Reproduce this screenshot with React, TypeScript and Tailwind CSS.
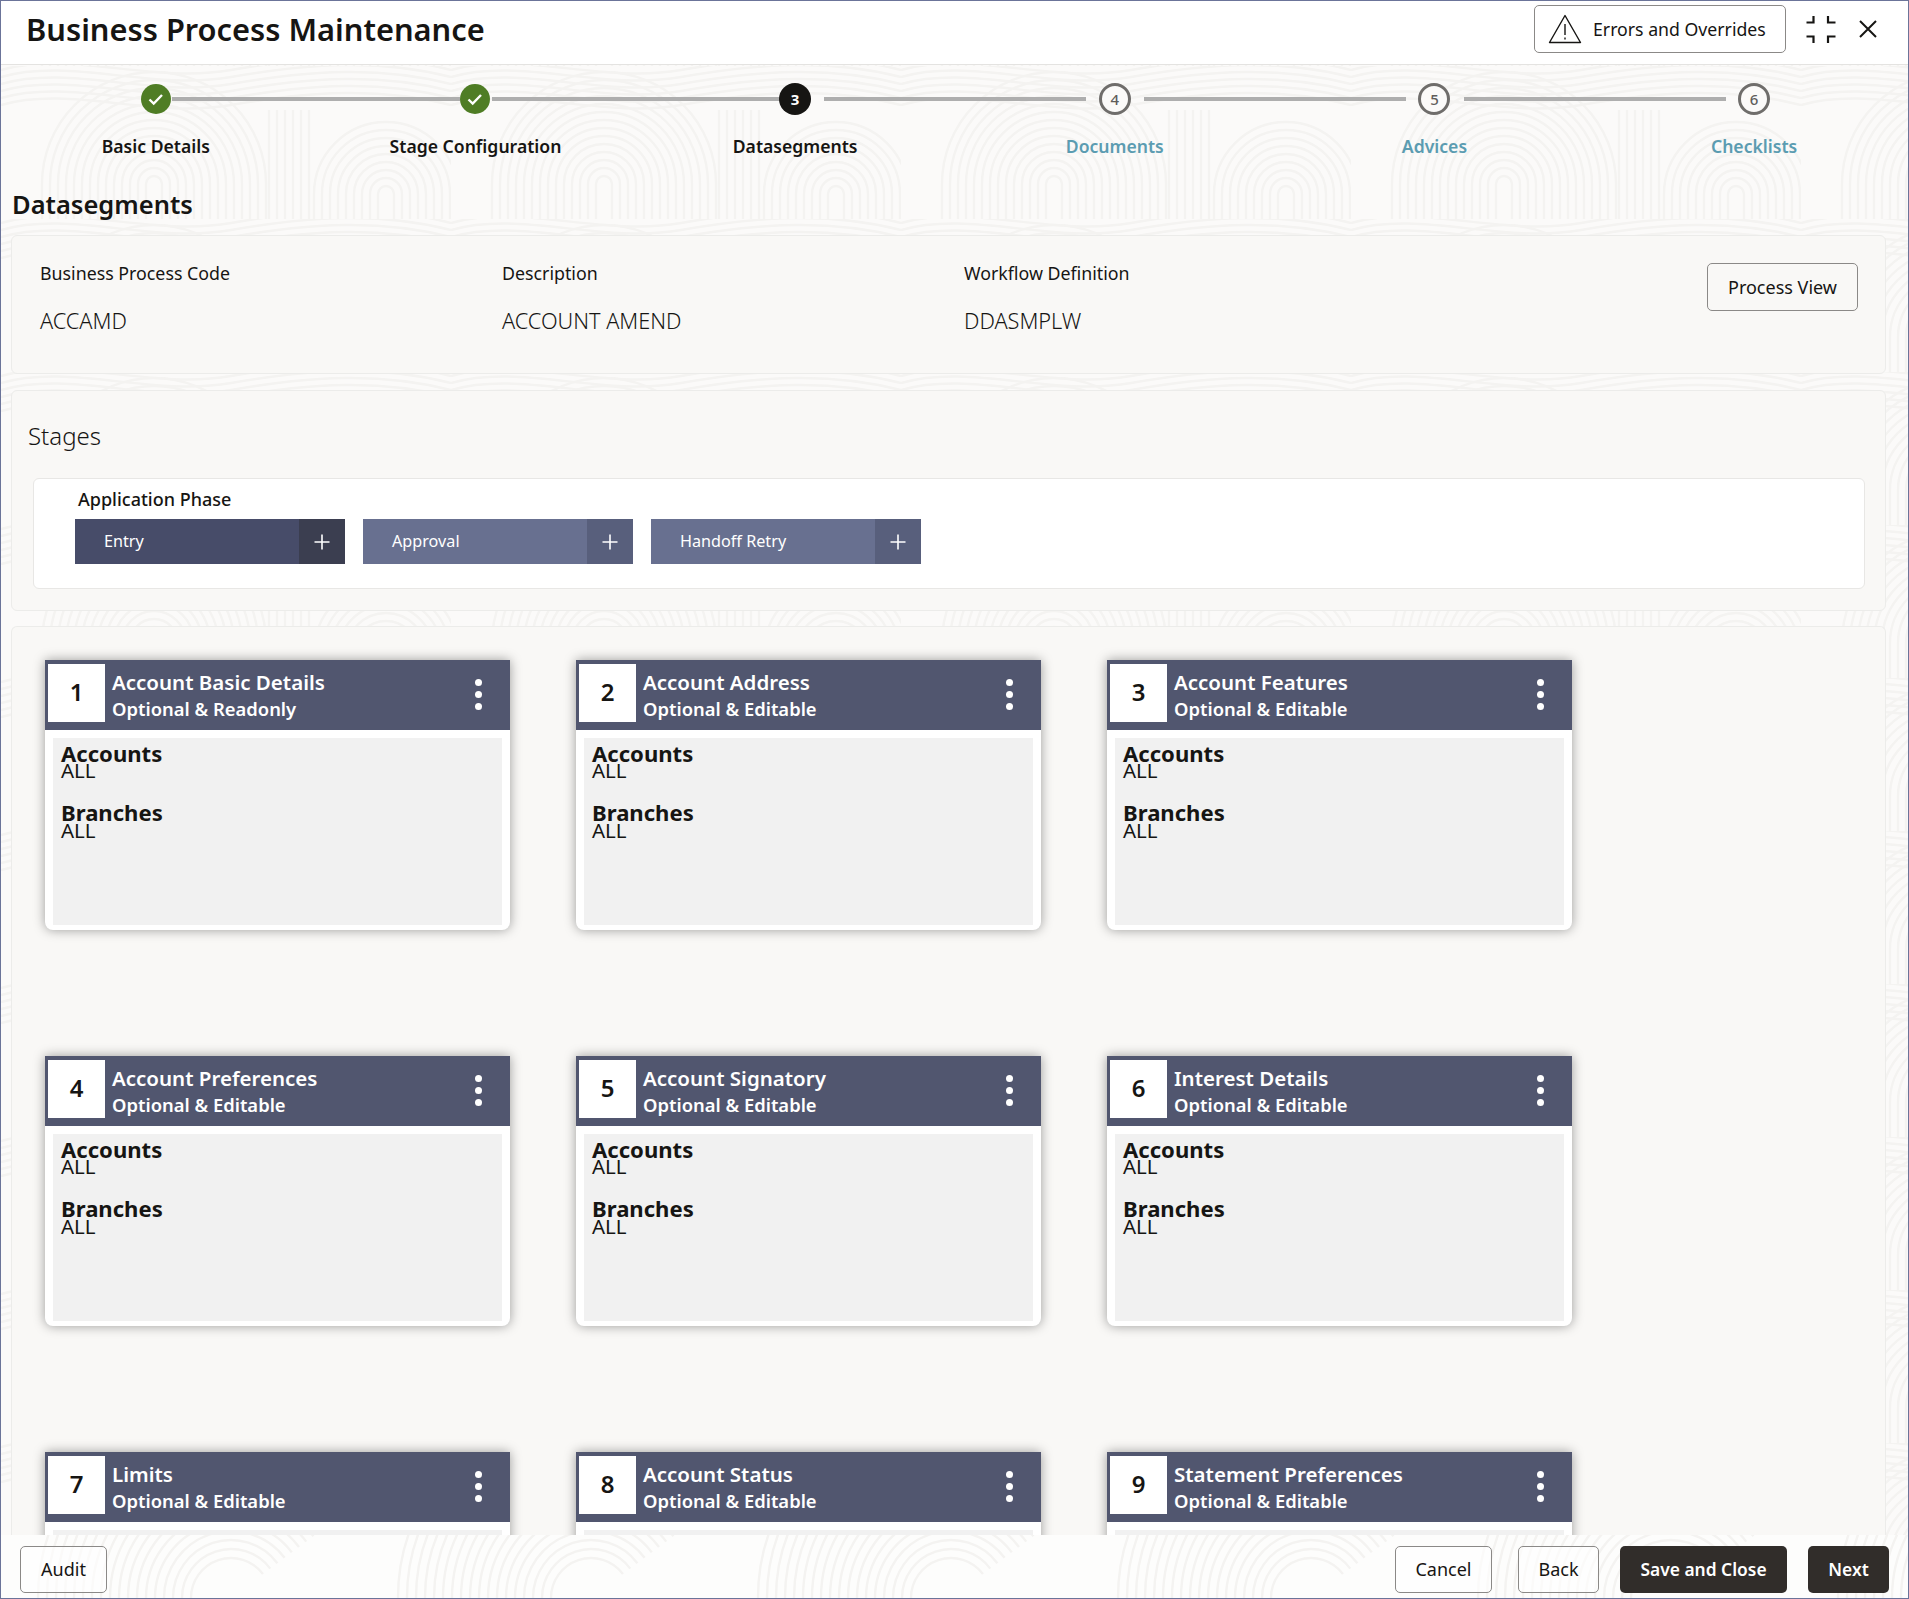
const F = "font-['Noto_Sans',sans-serif]";

type Step = { label: string; state: "done" | "current" | "todo" };

const STEPS: Step[] = [
  { label: "Basic Details", state: "done" },
  { label: "Stage Configuration", state: "done" },
  { label: "Datasegments", state: "current" },
  { label: "Documents", state: "todo" },
  { label: "Advices", state: "todo" },
  { label: "Checklists", state: "todo" },
];

const CARDS = [
  { title: "Account Basic Details", sub: "Optional & Readonly" },
  { title: "Account Address", sub: "Optional & Editable" },
  { title: "Account Features", sub: "Optional & Editable" },
  { title: "Account Preferences", sub: "Optional & Editable" },
  { title: "Account Signatory", sub: "Optional & Editable" },
  { title: "Interest Details", sub: "Optional & Editable" },
  { title: "Limits", sub: "Optional & Editable" },
  { title: "Account Status", sub: "Optional & Editable" },
  { title: "Statement Preferences", sub: "Optional & Editable" },
];

// faint fingerprint texture behind the page
function Whorls() {
  const arches: string[] = [];
  for (let r = 8; r <= 112; r += 8) {
    arches.push(`M${153 - r} 153 V118 A${r} ${r} 0 0 1 ${153 + r} 118 V153`);
  }
  const small: string[] = [];
  for (let r = 8; r <= 72; r += 8) {
    small.push(`M${385 - r} 153 V128 A${r} ${r} 0 0 1 ${385 + r} 128 V153`);
  }
  const waves: string[] = [];
  for (let i = 0; i < 6; i++) {
    waves.push(`M0 ${i * 7 + 4} C70 ${i * 7 - 16} 150 ${i * 7 + 18} 230 ${i * 7 + 4} S380 ${i * 7 - 14} 450 ${i * 7 + 4}`);
  }
  const bars: string[] = [];
  for (let x = 268; x < 316; x += 8) {
    bars.push(`M${x} 44 V153`);
  }
  return (
    <svg className="absolute inset-0 w-full h-full" aria-hidden="true">
      <defs>
        <pattern id="whorl" width="450" height="153" patternUnits="userSpaceOnUse" x="0" y="65">
          {[...arches, ...small, ...waves, ...bars].map((d) => (
            <path key={d} d={d} fill="none" stroke="#f4f3f1" strokeWidth="2.4" />
          ))}
        </pattern>
      </defs>
      <rect width="100%" height="100%" fill="url(#whorl)" />
    </svg>
  );
}

// the footer strip shows only the big sweeping part of the texture
function FooterSweep() {
  const sweeps: string[] = [];
  for (let r = 40; r <= 200; r += 9) {
    sweeps.push(`M${230 - r} 63 A${r} ${r} 0 0 1 ${230 + r * 0.8} ${63 - r * 0.6}`);
  }
  return (
    <svg className="absolute inset-0 w-full h-full" aria-hidden="true">
      <defs>
        <pattern id="sweep" width="360" height="63" patternUnits="userSpaceOnUse">
          {sweeps.map((d) => (
            <path key={d} d={d} fill="none" stroke="#f4f3f1" strokeWidth="2.4" />
          ))}
        </pattern>
      </defs>
      <rect width="100%" height="100%" fill="#fdfdfc" />
      <rect width="100%" height="100%" fill="url(#sweep)" />
    </svg>
  );
}

function StepDot({ step, n }: { step: Step; n: number }) {
  if (step.state === "done") {
    return (
      <div className="w-[30px] h-[30px] rounded-full bg-[#4f7d25] flex items-center justify-center">
        <svg width="18" height="18" viewBox="0 0 18 18" fill="none" stroke="#fff" strokeWidth="2.4">
          <path d="M2.5 9.5l4.2 4L15 5" />
        </svg>
      </div>
    );
  }
  if (step.state === "current") {
    return (
      <div className="w-[32px] h-[32px] rounded-full bg-[#161513] text-white text-[15px] font-bold flex items-center justify-center">
        {n}
      </div>
    );
  }
  return (
    <div className="w-[32px] h-[32px] rounded-full border-[3px] border-[#6f6d6b] bg-[#fbfaf9] text-[#5f5d5b] text-[15px] font-medium flex items-center justify-center">
      {n}
    </div>
  );
}

function Stepper() {
  return (
    <div className="relative h-[106px] ml-[-5px] w-[1918px] flex">
      {STEPS.map((step, i) => (
        <div key={step.label} className="relative w-[319.66px] pt-[18px] flex flex-col items-center">
          {i < 5 && (
            <div
              className={
                "absolute top-[32px] h-[4px] bg-[#aeaeae] " +
                (i < 2 ? "left-[176px] w-[288px]" : "left-[189px] w-[262px]")
              }
            />
          )}
          <div className="h-[32px] flex items-center justify-center">
            <StepDot step={step} n={i + 1} />
          </div>
          <div
            className={
              "mt-[19px] text-[17.6px] leading-[24px] font-semibold " +
              (step.state === "todo" ? "text-[#5b9cb1]" : "text-[#161513]")
            }
          >
            {step.label}
          </div>
        </div>
      ))}
    </div>
  );
}

function StageButton({ label, active }: { label: string; active?: boolean }) {
  return (
    <div className={"w-[270px] h-[45px] flex text-white " + (active ? "bg-[#474c69]" : "bg-[#687090]")}>
      <div className="flex-1 pl-[29px] pb-[1px] flex items-center text-[16.2px]">{label}</div>
      <div className={"w-[46px] flex items-center justify-center " + (active ? "bg-[#3b3e50]" : "bg-[#585f7c]")}>
        <svg width="18" height="18" viewBox="0 0 18 18" stroke="#fff" strokeWidth="1.6">
          <path d="M9 1.5v15M1.5 9h15" />
        </svg>
      </div>
    </div>
  );
}

function Card({ n, title, sub }: { n: number; title: string; sub: string }) {
  return (
    <div className="w-[465px] h-[270px] bg-white rounded-b-[8px] shadow-[0_0_12px_rgba(0,0,0,0.38)] flex flex-col">
      <div className="h-[70px] bg-[#51566f] flex items-center pl-[3px] pr-[28px] text-white shrink-0">
        <div className="self-start mt-[4px] w-[57px] h-[58px] pb-[3px] bg-white text-[#161513] text-[24px] font-semibold flex items-center justify-center">
          {n}
        </div>
        <div className="ml-[7px] flex-1">
          <div className="text-[20.5px] leading-[26px] font-semibold">{title}</div>
          <div className="text-[18.4px] leading-[26px] font-semibold pt-[1px]">{sub}</div>
        </div>
        <div className="flex flex-col gap-[5px] mb-[2px]">
          <div className="w-[7px] h-[7px] rounded-full bg-white" />
          <div className="w-[7px] h-[7px] rounded-full bg-white" />
          <div className="w-[7px] h-[7px] rounded-full bg-white" />
        </div>
      </div>
      <div className="mx-[8px] mt-[8px] mb-[5px] flex-1 bg-[#f1f1f1] px-[8px] pt-[2px] text-[#161513]">
        <div className="text-[22.1px] leading-[26px] font-bold">Accounts</div>
        <div className="mt-[1px] text-[20.5px] leading-[7px]">ALL</div>
        <div className="mt-[25px] text-[22.1px] leading-[26px] font-bold">Branches</div>
        <div className="text-[20.5px] leading-[11px]">ALL</div>
      </div>
    </div>
  );
}

function OutlineButton({ label, width }: { label: string; width: string }) {
  return (
    <button className={"h-[47px] rounded-[5px] border border-[#8b8987] bg-white/60 text-[18px] text-[#161513] " + width}>
      {label}
    </button>
  );
}

function DarkButton({ label, width }: { label: string; width: string }) {
  return (
    <button className={"h-[47px] rounded-[5px] bg-[#312d2a] text-[17.4px] font-semibold text-white " + width}>
      {label}
    </button>
  );
}

export default function App() {
  return (
    <div className={"relative w-[1909px] h-[1599px] overflow-hidden bg-[#fbfaf9] border border-[#6b7499] flex flex-col text-[#161513] " + F}>
      <Whorls />

      <div className="relative h-[64px] shrink-0 bg-white border-b border-[#e4e3e1] flex items-center pl-[25px] pb-[7px]">
        <h1 className="text-[30.8px] font-semibold flex-1">Business Process Maintenance</h1>
        <button className="w-[252px] h-[48px] rounded-[5px] border border-[#8b8987] flex items-center pl-[13px] text-[17.7px]">
          <svg width="34" height="30" viewBox="0 0 34 30" fill="none" stroke="#161513" strokeWidth="1.4" strokeLinejoin="round">
            <path d="M17 1.5L32.5 28.5H1.5z" />
            <path d="M17 10v11M17 23.5v2" />
          </svg>
          <span className="ml-[11px]">Errors and Overrides</span>
        </button>
        <svg className="ml-[20px]" width="30" height="29" viewBox="0 0 30 29" fill="none" stroke="#161513" strokeWidth="2.2">
          <path d="M7.5 1v6.5H.5M22 1v6.5h7.5M7.5 28v-6.5H.5M22 28v-6.5h7.5" />
        </svg>
        <svg className="ml-[22px] mr-[30px]" width="20" height="18" viewBox="0 0 20 18" fill="none" stroke="#161513" strokeWidth="2">
          <path d="M2 1l16 16M18 1L2 17" />
        </svg>
      </div>

      <div className="relative flex-1 min-h-0 flex flex-col">
        <Stepper />
        <h2 className="ml-[11px] mt-[15px] text-[25.5px] leading-[36px] font-semibold">Datasegments</h2>

        <div className="mt-[13px] ml-[10px] w-[1875px] h-[139px] shrink-0 rounded-[6px] border border-[#ececea] bg-[#f9f8f6] flex pl-[28px] pr-[27px] pt-[25px]">
          {[
            ["Business Process Code", "ACCAMD"],
            ["Description", "ACCOUNT AMEND"],
            ["Workflow Definition", "DDASMPLW"],
          ].map(([label, value]) => (
            <div key={label} className="w-[462px]">
              <div className="text-[17.8px] leading-[24px]">{label}</div>
              <div className="mt-[24px] text-[21.7px] leading-[24px] font-light">{value}</div>
            </div>
          ))}
          <button className="ml-auto mt-[2px] w-[151px] h-[48px] rounded-[5px] border border-[#8b8987] text-[18px]">
            Process View
          </button>
        </div>

        <div className="mt-[16px] ml-[10px] w-[1875px] h-[221px] shrink-0 rounded-[6px] border border-[#ececea] bg-[#f9f8f6] pt-[28px]">
          <div className="ml-[16px] text-[24px] leading-[34px] font-light">Stages</div>
          <div className="mt-[25px] ml-[21px] w-[1832px] h-[111px] rounded-[6px] border border-[#e8e7e5] bg-white pl-[41px]">
            <div className="ml-[3px] mt-[8px] text-[18px] leading-[24px] font-medium">Application Phase</div>
            <div className="mt-[8px] flex gap-[18px]">
              <StageButton label="Entry" active />
              <StageButton label="Approval" />
              <StageButton label="Handoff Retry" />
            </div>
          </div>
        </div>

        <div className="mt-[15px] ml-[10px] w-[1875px] flex-1 min-h-0 overflow-hidden rounded-t-[6px] border border-[#ececea] border-b-0 bg-[#f9f8f6] pl-[33px] pt-[33px]">
          <div className="grid grid-cols-[repeat(3,465px)] gap-x-[66px] gap-y-[126px]">
            {CARDS.map((c, i) => (
              <Card key={c.title} n={i + 1} title={c.title} sub={c.sub} />
            ))}
          </div>
        </div>
      </div>

      <div className="relative h-[63px] shrink-0">
        <FooterSweep />
        <div className="relative flex items-start pt-[11px] pl-[19px] pr-[19px]">
          <OutlineButton label="Audit" width="w-[87px]" />
          <div className="ml-auto flex gap-[26px]">
            <OutlineButton label="Cancel" width="w-[97px]" />
            <OutlineButton label="Back" width="w-[81px]" />
            <DarkButton label="Save and Close" width="w-[167px] -ml-[5px]" />
            <DarkButton label="Next" width="w-[81px] -ml-[5px]" />
          </div>
        </div>
      </div>
    </div>
  );
}
